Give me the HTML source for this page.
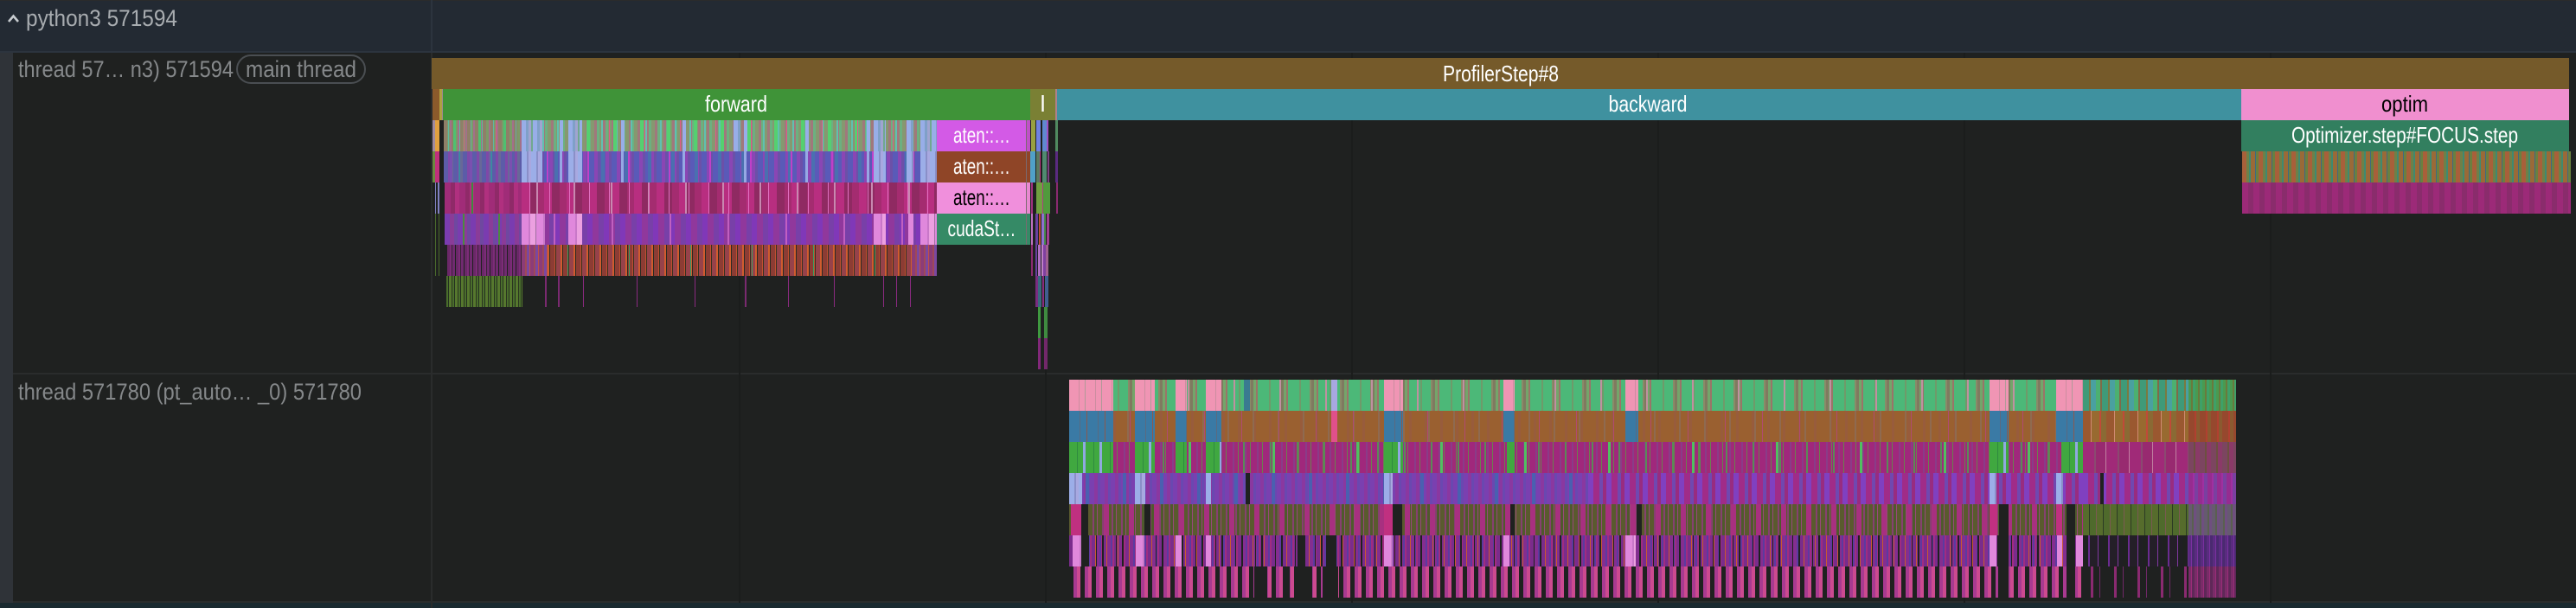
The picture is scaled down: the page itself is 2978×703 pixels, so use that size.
<!DOCTYPE html>
<html><head><meta charset="utf-8"><style>
html,body{margin:0;padding:0;background:#1f2120;width:2978px;height:703px;overflow:hidden}
#r{position:relative;width:2978px;height:703px;overflow:hidden;background:#1f2120}
#r div{position:absolute}
svg{position:absolute;left:0;top:0}
text{font-family:"Liberation Sans",sans-serif}
.a{background:
repeating-linear-gradient(90deg,transparent 0 23px,#e0558a 23px 24px,transparent 24px 37px),
repeating-linear-gradient(90deg,transparent 0 11px,#4fc070 11px 14px,transparent 14px 29px),
repeating-linear-gradient(90deg,transparent 0 5px,#5fb8a0 5px 6px,transparent 6px 13px),
repeating-linear-gradient(90deg,#8f7f68 0 4px,#7c9a68 4px 7px,#a3708a 7px 9px)}
.a2{background:
repeating-linear-gradient(90deg,transparent 0 44px,#98aee8 44px 48px,transparent 48px 71px),
repeating-linear-gradient(90deg,transparent 0 19px,#e05a88 19px 20px,transparent 20px 41px),
repeating-linear-gradient(90deg,transparent 0 13px,#55d070 13px 17px,transparent 17px 31px),
repeating-linear-gradient(90deg,transparent 0 7px,#60c0b0 7px 9px,transparent 9px 17px),
repeating-linear-gradient(90deg,#869870 0 4px,#a0787c 4px 7px,#6cb080 7px 10px)}
.ab{background:
repeating-linear-gradient(90deg,#98aee8 0 5px,#7fa0c8 5px 8px,#a0a4d0 8px 11px,#70a890 11px 13px)}
.b{background:
repeating-linear-gradient(90deg,transparent 0 17px,#3c8aa0 17px 19px,transparent 19px 37px),
repeating-linear-gradient(90deg,transparent 0 7px,#7a50b0 7px 10px,transparent 10px 23px),
repeating-linear-gradient(90deg,#5c5ca8 0 5px,#8048a8 5px 8px,#686898 8px 11px)}
.b2{background:
repeating-linear-gradient(90deg,transparent 0 44px,#96a8e4 44px 47px,transparent 47px 71px),
repeating-linear-gradient(90deg,transparent 0 29px,#c040c8 29px 31px,transparent 31px 47px),
repeating-linear-gradient(90deg,transparent 0 11px,#4a70b0 11px 15px,transparent 15px 27px),
repeating-linear-gradient(90deg,#5a5ab8 0 6px,#8a46b4 6px 10px,#6c50a8 10px 13px)}
.bb{background:repeating-linear-gradient(90deg,#9caee8 0 6px,#8a8fc8 6px 8px,#a8a8e0 8px 11px)}
.c{background:
repeating-linear-gradient(90deg,transparent 0 31px,#3f8a40 31px 33px,transparent 33px 61px),
repeating-linear-gradient(90deg,#a02c78 0 7px,#8f2a68 7px 12px,#b0307f 12px 17px)}
.c2{background:
repeating-linear-gradient(90deg,transparent 0 9px,#e070c0 9px 10px,transparent 10px 23px),
repeating-linear-gradient(90deg,transparent 0 17px,#c888b0 17px 19px,transparent 19px 43px),
repeating-linear-gradient(90deg,#b82e80 0 9px,#8f2a62 9px 18px,#a42c70 18px 26px)}
.d{background:
repeating-linear-gradient(90deg,transparent 0 21px,#4c8a40 21px 23px,transparent 23px 41px),
repeating-linear-gradient(90deg,#7a3cb0 0 6px,#8a3c98 6px 11px,#6f48a0 11px 15px)}
.d2{background:
repeating-linear-gradient(90deg,transparent 0 37px,#c060c0 37px 39px,transparent 39px 67px),
repeating-linear-gradient(90deg,#8038b8 0 6px,#90389c 6px 13px,#7840a8 13px 19px)}
.dp{background:repeating-linear-gradient(90deg,#e088dc 0 8px,#c878c8 8px 10px,#eca0e0 10px 16px,#a070a0 16px 17px)}
.e{background:
repeating-linear-gradient(90deg,#1f2120 0 1px,#6a2868 1px 4px,#7c2c78 4px 6px,#3a2438 6px 7px,#702a70 7px 10px)}
.e2{background:
repeating-linear-gradient(90deg,transparent 0 23px,#3aa060 23px 24px,transparent 24px 71px),
repeating-linear-gradient(90deg,#d05c2e 0 2px,#2b2a22 2px 3px,#8c3c34 3px 8px,#c05030 8px 9px,#38301f 9px 10px,#96424a 10px 15px)}
.e0{background:repeating-linear-gradient(90deg,#8c3c78 0 4px,#a04858 4px 6px,#7a48a0 6px 9px,#c05048 9px 10px)}
.f{background:repeating-linear-gradient(90deg,#4a6e2c 0 2px,#243020 2px 3px,#56782e 3px 6px,#2a3420 6px 7px)}
.g{background:
repeating-linear-gradient(90deg,transparent 0 31px,#c090a0 31px 33px,transparent 33px 53px),
repeating-linear-gradient(90deg,#7f7a60 0 3px,#74a56a 3px 6px,#9a7468 6px 8px,#4cb878 8px 21px,#6f9a6a 21px 23px,#4cb878 23px 33px,#8a8a68 33px 35px)}
.gp{background:repeating-linear-gradient(90deg,#f095b4 0 11px,#cc8ea0 11px 12px,#f095b4 12px 18px,#b09a98 18px 19px)}
.h{background:
repeating-linear-gradient(90deg,transparent 0 27px,#b04a70 27px 28px,transparent 28px 43px),
repeating-linear-gradient(90deg,transparent 0 9px,#8f6a50 9px 11px,transparent 11px 29px),
repeating-linear-gradient(90deg,#9a6030 0 15px,#985c3c 15px 18px)}
.hb{background:repeating-linear-gradient(90deg,#3a7aa5 0 12px,#5a6a80 12px 13px,#3a7aa5 13px 20px,#8a5a50 20px 21px)}
.i{background:
repeating-linear-gradient(90deg,transparent 0 41px,#50c060 41px 44px,transparent 44px 97px),
repeating-linear-gradient(90deg,transparent 0 15px,#5a8a58 15px 17px,transparent 17px 31px),
repeating-linear-gradient(90deg,#a0287c 0 7px,#8a3c88 7px 9px,#a02a78 9px 13px,#6a8050 13px 14px)}
.ig{background:repeating-linear-gradient(90deg,#40a840 0 9px,#2f8a40 9px 10px,#40a840 10px 16px,#90a8e0 16px 19px)}
.j{background:
repeating-linear-gradient(90deg,transparent 0 19px,#4a60b0 19px 23px,transparent 23px 43px),
repeating-linear-gradient(90deg,#7a40b0 0 5px,#8a38a0 5px 9px,#6a48b0 9px 12px)}
.j2{background:repeating-linear-gradient(90deg,#8040c0 0 6px,#a02c88 6px 13px,#7048b0 13px 17px,#982c80 17px 21px)}
.k{background:
repeating-linear-gradient(90deg,transparent 0 11px,#a83080 11px 17px,transparent 17px 29px),
repeating-linear-gradient(90deg,#5a5a2e 0 5px,#864070 5px 7px,#4f5a2c 7px 10px,#98487a 10px 11px)}
.l{background:
repeating-linear-gradient(90deg,transparent 0 8px,#1f2120 8px 9px,transparent 9px 15px,#1f2120 15px 17px,transparent 17px 23px),
repeating-linear-gradient(90deg,#7a2c8c 0 4px,#c85a30 4px 5px,#842e90 5px 9px,#5c3aa0 9px 11px,#a02c80 11px 13px)}
.m{background:repeating-linear-gradient(90deg,#1f2120 0 5px,#a83a90 5px 9px,#cc4a90 9px 13px)}
.k3{background:repeating-linear-gradient(90deg,#566c2c 0 7px,#2c3a24 7px 8px,#4f6a2c 8px 15px,#7a5a50 15px 16px)}
.l3{background:repeating-linear-gradient(90deg,#1f2120 0 6px,#6a2c90 6px 8px,#241f28 8px 17px,#8038a0 17px 18px,#201f24 18px 23px)}
.m3{background:repeating-linear-gradient(90deg,#1f2120 0 9px,#8a2a70 9px 12px,#1f2120 12px 19px,#702868 19px 20px,#1f2120 20px 27px)}
.g3{background:repeating-linear-gradient(90deg,#3f9a78 0 7px,#7a7a40 7px 9px,#4aa0a0 9px 15px,#4cb070 15px 20px,#806a48 20px 22px)}
.h3{background:repeating-linear-gradient(90deg,#9a5830 0 9px,#d08a70 9px 10px,#986a30 10px 19px,#c04a38 19px 21px,#8a6a34 21px 27px)}
.i3{background:repeating-linear-gradient(90deg,#a02a78 0 13px,#8a4a70 13px 15px,#982a70 15px 26px,#c080a0 26px 27px)}
.g4{background:repeating-linear-gradient(90deg,#4a9a50 0 3px,#6a7a3c 3px 5px,#3fa068 5px 8px)}
.h4{background:repeating-linear-gradient(90deg,#96482e 0 7px,#b04030 7px 9px,#8a5a30 9px 13px)}
.i4{background:repeating-linear-gradient(90deg,#7c4560 0 6px,#6c5040 6px 8px,#8a3a68 8px 13px)}
.j4{background:repeating-linear-gradient(90deg,#962c90 0 5px,#a030a0 5px 7px,#7a40a0 7px 11px)}
.k4{background:repeating-linear-gradient(90deg,#665a70 0 4px,#5a6050 4px 6px,#6f4f80 6px 9px)}
.l4{background:repeating-linear-gradient(90deg,#5a2c80 0 3px,#7a30a0 3px 4px,#4a2a70 4px 7px)}
.m4{background:repeating-linear-gradient(90deg,#7a2c68 0 3px,#9a2c78 3px 4px,#5f2858 4px 7px)}
.s1{background:repeating-linear-gradient(90deg,#a8603a 0 5px,#6f8048 5px 8px,#3f8a70 8px 10px,#9a6a38 10px 15px,#3f6a80 15px 16px,#6a8040 16px 19px)}
.s2{background:repeating-linear-gradient(90deg,#9c2a78 0 7px,#8a2c6c 7px 13px)}
</style></head><body><div id="r">
<!-- header -->
<div style="left:0;top:0;width:2978px;height:60px;background:#232a33"></div>
<div style="left:0;top:0;width:2978px;height:1px;background:#2b2b2b"></div>
<div style="left:0;top:59px;width:2978px;height:2px;background:#2c343e"></div>
<div style="left:498px;top:0;width:2px;height:60px;background:#2c343e"></div>
<!-- side strip + lines -->
<div style="left:0;top:61px;width:15px;height:636px;background:#2f3338"></div>
<div style="left:15px;top:431px;width:2963px;height:2px;background:#2a2c2c"></div>
<div style="left:15px;top:695px;width:2963px;height:2px;background:#2a2c2c"></div>
<div style="left:0;top:697px;width:2978px;height:6px;background:#1a2a30"></div>
<div style="left:498px;top:61px;width:2px;height:642px;background:#2a2c2c"></div>
<div style="left:854px;top:61px;width:2px;height:636px;background:#1b1d1c"></div>
<div style="left:1208px;top:61px;width:2px;height:636px;background:#1b1d1c"></div>
<div style="left:1562px;top:61px;width:2px;height:636px;background:#1b1d1c"></div>
<div style="left:1916px;top:61px;width:2px;height:636px;background:#1b1d1c"></div>
<div style="left:2270px;top:61px;width:2px;height:636px;background:#1b1d1c"></div>
<div style="left:2624px;top:61px;width:2px;height:636px;background:#1b1d1c"></div>

<!-- main thread blocks -->
<div style="left:499px;top:67px;width:2471px;height:36px;background:#755a2a"></div>
<div style="left:500px;top:103px;width:8px;height:36px;background:#8b5a2b"></div>
<div style="left:508px;top:103px;width:3px;height:36px;background:#b0a040"></div>
<div style="left:511px;top:103px;width:1px;height:36px;background:#a08a90"></div>
<div style="left:512px;top:103px;width:679px;height:36px;background:#3f9338"></div>
<div style="left:1191px;top:103px;width:29px;height:36px;background:#7a8034"></div>
<div style="left:1220px;top:103px;width:2px;height:36px;background:#b08088"></div>
<div style="left:1222px;top:103px;width:1369px;height:36px;background:#3f919f"></div>
<div style="left:2591px;top:103px;width:379px;height:36px;background:#f08fcf"></div>
<div style="left:2591px;top:139px;width:379px;height:36px;background:#327f5f"></div>
<div class="s1" style="left:2592px;top:175px;width:380px;height:36px"></div>
<div class="s2" style="left:2592px;top:211px;width:380px;height:36px"></div>

<!-- left fragments -->
<div style="left:500px;top:139px;width:3px;height:36px;background:#a08aa0"></div>
<div style="left:503px;top:139px;width:5px;height:36px;background:#e0a040"></div>
<div style="left:500px;top:175px;width:3px;height:36px;background:#6a8a40"></div>
<div style="left:503px;top:175px;width:5px;height:36px;background:#c0307c"></div>
<div style="left:503px;top:211px;width:1px;height:36px;background:#8080c0"></div>
<div style="left:506px;top:211px;width:2px;height:36px;background:#8080c0"></div>
<div style="left:503px;top:247px;width:1px;height:72px;background:#4a6a2c"></div>
<div style="left:507px;top:247px;width:1px;height:72px;background:#4a6a2c"></div>

<!-- row 3-8 forward -->
<div class="a" style="left:513px;top:139px;width:90px;height:36px"></div>
<div class="a2" style="left:603px;top:139px;width:480px;height:36px"></div>
<div class="ab" style="left:603px;top:139px;width:24px;height:36px"></div>
<div class="ab" style="left:657px;top:139px;width:16px;height:36px"></div>
<div class="ab" style="left:848px;top:139px;width:8px;height:36px"></div>
<div class="ab" style="left:1010px;top:139px;width:14px;height:36px"></div>
<div class="ab" style="left:1048px;top:139px;width:8px;height:36px"></div>
<div class="ab" style="left:1064px;top:139px;width:19px;height:36px"></div>
<div class="b" style="left:513px;top:175px;width:90px;height:36px"></div>
<div class="b2" style="left:603px;top:175px;width:480px;height:36px"></div>
<div class="bb" style="left:603px;top:175px;width:24px;height:36px"></div>
<div class="bb" style="left:657px;top:175px;width:16px;height:36px"></div>
<div class="bb" style="left:1010px;top:175px;width:14px;height:36px"></div>
<div class="bb" style="left:1048px;top:175px;width:8px;height:36px"></div>
<div class="bb" style="left:1064px;top:175px;width:19px;height:36px"></div>
<div class="c" style="left:514px;top:211px;width:89px;height:36px"></div>
<div class="c2" style="left:603px;top:211px;width:480px;height:36px"></div>
<div class="d" style="left:514px;top:247px;width:89px;height:36px"></div>
<div class="d2" style="left:603px;top:247px;width:480px;height:36px"></div>
<div class="dp" style="left:603px;top:247px;width:27px;height:36px"></div>
<div class="dp" style="left:657px;top:247px;width:16px;height:36px"></div>
<div class="dp" style="left:1010px;top:247px;width:14px;height:36px"></div>
<div class="dp" style="left:1050px;top:247px;width:6px;height:36px"></div>
<div class="dp" style="left:1064px;top:247px;width:19px;height:36px"></div>
<div class="e" style="left:516px;top:283px;width:87px;height:36px"></div>
<div class="e0" style="left:603px;top:283px;width:30px;height:36px"></div>
<div class="e2" style="left:633px;top:283px;width:421px;height:36px"></div>
<div class="e0" style="left:1054px;top:283px;width:29px;height:36px"></div>
<div class="f" style="left:516px;top:319px;width:88px;height:36px"></div>
<div style="left:630px;top:319px;width:2px;height:36px;background:#7a2a70"></div>
<div style="left:645px;top:319px;width:2px;height:36px;background:#7a2a70"></div>
<div style="left:674px;top:319px;width:1px;height:36px;background:#8a2a80"></div>
<div style="left:736px;top:319px;width:1px;height:36px;background:#8a2a80"></div>
<div style="left:803px;top:319px;width:1px;height:36px;background:#8a2a80"></div>
<div style="left:861px;top:319px;width:2px;height:36px;background:#7a2a70"></div>
<div style="left:911px;top:319px;width:1px;height:36px;background:#8a2a80"></div>
<div style="left:964px;top:319px;width:1px;height:36px;background:#8a2a80"></div>
<div style="left:1021px;top:319px;width:1px;height:36px;background:#8a2a80"></div>
<div style="left:1036px;top:319px;width:1px;height:36px;background:#8a2a80"></div>
<div style="left:1052px;top:319px;width:1px;height:36px;background:#8a2a80"></div>

<!-- aten column -->
<div style="left:1083px;top:139px;width:103px;height:36px;background:#d35ae6"></div>
<div style="left:1083px;top:175px;width:103px;height:36px;background:#8f4527"></div>
<div style="left:1083px;top:211px;width:103px;height:36px;background:#f08fdc"></div>
<div style="left:1083px;top:247px;width:103px;height:36px;background:#358a66"></div>
<div style="left:1186px;top:139px;width:1px;height:144px;background:#7a6a70"></div>
<div style="left:1187px;top:139px;width:4px;height:36px;background:#c050c8"></div>
<div style="left:1187px;top:175px;width:4px;height:36px;background:#8f4527"></div>
<div style="left:1187px;top:211px;width:4px;height:36px;background:#e888d0"></div>
<div style="left:1187px;top:247px;width:4px;height:36px;background:#358a66"></div>
<div style="left:1192px;top:247px;width:2px;height:36px;background:#c070c0"></div>
<div style="left:1192px;top:283px;width:2px;height:36px;background:#8a2a70"></div>

<!-- narrow column -->
<div style="left:1192px;top:139px;width:5px;height:36px;background:#98a040"></div>
<div style="left:1198px;top:139px;width:5px;height:36px;background:#7080e0"></div>
<div style="left:1205px;top:139px;width:5px;height:36px;background:#6088d0"></div>
<div style="left:1210px;top:139px;width:2px;height:36px;background:#a050c0"></div>
<div style="left:1220px;top:139px;width:3px;height:36px;background:#508a60"></div>
<div style="left:1191px;top:175px;width:6px;height:36px;background:#50a0c8"></div>
<div style="left:1198px;top:175px;width:4px;height:36px;background:#5a7a60"></div>
<div style="left:1202px;top:175px;width:1px;height:36px;background:#c03080"></div>
<div style="left:1205px;top:175px;width:5px;height:36px;background:#508a70"></div>
<div style="left:1211px;top:175px;width:2px;height:36px;background:#7a4080"></div>
<div style="left:1220px;top:175px;width:3px;height:36px;background:#5a2a80"></div>
<div style="left:1192px;top:211px;width:2px;height:36px;background:#a03080"></div>
<div style="left:1198px;top:211px;width:7px;height:36px;background:#70a040"></div>
<div style="left:1205px;top:211px;width:1px;height:36px;background:#a84080"></div>
<div style="left:1206px;top:211px;width:8px;height:36px;background:#509a3c"></div>
<div style="left:1221px;top:211px;width:2px;height:36px;background:#8a2a70"></div>
<div style="left:1197px;top:247px;width:3px;height:36px;background:#6a40a0"></div>
<div style="left:1201px;top:247px;width:2px;height:36px;background:#c05030"></div>
<div style="left:1204px;top:247px;width:3px;height:36px;background:#9070d0"></div>
<div style="left:1207px;top:247px;width:2px;height:36px;background:#4a8a50"></div>
<div style="left:1210px;top:247px;width:3px;height:36px;background:#a04090"></div>
<div style="left:1197px;top:283px;width:2px;height:36px;background:#6a40a0"></div>
<div style="left:1200px;top:283px;width:3px;height:36px;background:#b070c0"></div>
<div style="left:1204px;top:283px;width:2px;height:36px;background:#c080c8"></div>
<div style="left:1206px;top:283px;width:3px;height:36px;background:#8040a0"></div>
<div style="left:1209px;top:283px;width:3px;height:36px;background:#a06090"></div>
<div style="left:1197px;top:319px;width:3px;height:36px;background:#7a2c80"></div>
<div style="left:1200px;top:319px;width:4px;height:36px;background:#3a6a80"></div>
<div style="left:1205px;top:319px;width:2px;height:36px;background:#8a2c80"></div>
<div style="left:1208px;top:319px;width:4px;height:36px;background:#3f5f90"></div>
<div style="left:1200px;top:355px;width:3px;height:36px;background:#3f9a40"></div>
<div style="left:1207px;top:355px;width:4px;height:36px;background:#3f8a40"></div>
<div style="left:1200px;top:391px;width:3px;height:36px;background:#82287a"></div>
<div style="left:1207px;top:391px;width:4px;height:36px;background:#72286a"></div>

<!-- thread 2: rows -->
<div class="g" style="left:1236px;top:439px;width:1172px;height:36px"></div>
<div class="h" style="left:1236px;top:475px;width:1172px;height:36px"></div>
<div class="i" style="left:1236px;top:511px;width:1172px;height:36px"></div>
<div class="j" style="left:1236px;top:547px;width:600px;height:36px"></div>
<div class="j2" style="left:1836px;top:547px;width:572px;height:36px"></div>
<div class="k" style="left:1236px;top:583px;width:1172px;height:36px"></div>
<div class="l" style="left:1236px;top:619px;width:1172px;height:36px"></div>
<div class="m" style="left:1236px;top:655px;width:1172px;height:36px"></div>
<!-- tail -->
<div class="g3" style="left:2408px;top:439px;width:122px;height:36px"></div>
<div class="h3" style="left:2408px;top:475px;width:122px;height:36px"></div>
<div class="i3" style="left:2408px;top:511px;width:122px;height:36px"></div>
<div class="j2" style="left:2408px;top:547px;width:122px;height:36px"></div>
<div class="k3" style="left:2408px;top:583px;width:122px;height:36px"></div>
<div class="l3" style="left:2408px;top:619px;width:122px;height:36px"></div>
<div class="m3" style="left:2408px;top:655px;width:122px;height:36px"></div>
<div class="g4" style="left:2530px;top:439px;width:55px;height:36px"></div>
<div class="h4" style="left:2530px;top:475px;width:55px;height:36px"></div>
<div class="i4" style="left:2530px;top:511px;width:55px;height:36px"></div>
<div class="j4" style="left:2530px;top:547px;width:55px;height:36px"></div>
<div class="k4" style="left:2530px;top:583px;width:55px;height:36px"></div>
<div class="l4" style="left:2530px;top:619px;width:55px;height:36px"></div>
<div class="m4" style="left:2530px;top:655px;width:55px;height:36px"></div>
<!-- pink blocks -->
<div class="gp" style="left:1236px;top:439px;width:51px;height:36px"></div><div class="hb" style="left:1236px;top:475px;width:51px;height:36px"></div><div class="ig" style="left:1236px;top:511px;width:51px;height:36px"></div><div class="bb" style="left:1236px;top:547px;width:15px;height:36px"></div><div class="dp" style="left:1240px;top:619px;width:10px;height:36px"></div><div style="left:1238px;top:583px;width:12px;height:36px;background:#c03080"></div>
<div class="gp" style="left:1312px;top:439px;width:23px;height:36px"></div><div class="hb" style="left:1312px;top:475px;width:23px;height:36px"></div><div class="ig" style="left:1312px;top:511px;width:23px;height:36px"></div><div class="bb" style="left:1312px;top:547px;width:12px;height:36px"></div><div class="dp" style="left:1313px;top:619px;width:10px;height:36px"></div>
<div class="gp" style="left:1359px;top:439px;width:13px;height:36px"></div><div class="hb" style="left:1359px;top:475px;width:13px;height:36px"></div><div class="ig" style="left:1359px;top:511px;width:13px;height:36px"></div><div class="dp" style="left:1359px;top:619px;width:7px;height:36px"></div>
<div class="gp" style="left:1394px;top:439px;width:18px;height:36px"></div><div class="hb" style="left:1394px;top:475px;width:18px;height:36px"></div><div class="ig" style="left:1394px;top:511px;width:18px;height:36px"></div><div class="bb" style="left:1394px;top:547px;width:6px;height:36px"></div><div class="dp" style="left:1394px;top:619px;width:6px;height:36px"></div>
<div style="left:1438px;top:439px;width:7px;height:36px;background:#3a7a90"></div>
<div style="left:1539px;top:439px;width:7px;height:36px;background:#a8a8e0"></div><div style="left:1539px;top:475px;width:7px;height:36px;background:#e0508a"></div>
<div class="gp" style="left:1600px;top:439px;width:22px;height:36px"></div><div class="hb" style="left:1600px;top:475px;width:22px;height:36px"></div><div class="ig" style="left:1600px;top:511px;width:22px;height:36px"></div><div class="bb" style="left:1600px;top:547px;width:10px;height:36px"></div><div style="left:1600px;top:583px;width:10px;height:36px;background:#c03080"></div><div class="dp" style="left:1600px;top:619px;width:10px;height:36px"></div>
<div class="gp" style="left:1738px;top:439px;width:13px;height:36px"></div><div class="hb" style="left:1738px;top:475px;width:13px;height:36px"></div><div class="ig" style="left:1742px;top:511px;width:9px;height:36px"></div><div class="dp" style="left:1738px;top:619px;width:7px;height:36px"></div>
<div class="gp" style="left:1879px;top:439px;width:15px;height:36px"></div><div class="hb" style="left:1879px;top:475px;width:15px;height:36px"></div><div class="dp" style="left:1879px;top:619px;width:12px;height:36px"></div>
<div class="gp" style="left:2300px;top:439px;width:22px;height:36px"></div><div class="hb" style="left:2300px;top:475px;width:22px;height:36px"></div><div class="ig" style="left:2300px;top:511px;width:22px;height:36px"></div><div class="bb" style="left:2300px;top:547px;width:8px;height:36px"></div><div style="left:2300px;top:583px;width:9px;height:36px;background:#c03080"></div><div class="dp" style="left:2300px;top:619px;width:8px;height:36px"></div>
<div class="gp" style="left:2377px;top:439px;width:31px;height:36px"></div><div class="hb" style="left:2377px;top:475px;width:31px;height:36px"></div><div class="ig" style="left:2383px;top:511px;width:25px;height:36px"></div><div class="bb" style="left:2377px;top:547px;width:8px;height:36px"></div><div style="left:2377px;top:583px;width:7px;height:36px;background:#c03080"></div><div class="dp" style="left:2378px;top:619px;width:6px;height:36px"></div><div class="dp" style="left:2400px;top:619px;width:8px;height:36px"></div>
<!-- dark gaps -->
<div style="left:1440px;top:547px;width:5px;height:36px;background:#1f2120"></div>
<div style="left:2428px;top:547px;width:4px;height:36px;background:#1f2120"></div>
<div style="left:1250px;top:583px;width:8px;height:36px;background:#1f2120"></div>
<div style="left:1323px;top:583px;width:7px;height:36px;background:#1f2120"></div>
<div style="left:1610px;top:583px;width:11px;height:36px;background:#1f2120"></div>
<div style="left:1746px;top:583px;width:5px;height:36px;background:#1f2120"></div>
<div style="left:1892px;top:583px;width:6px;height:36px;background:#1f2120"></div>
<div style="left:2311px;top:583px;width:11px;height:36px;background:#1f2120"></div>
<div style="left:2389px;top:583px;width:10px;height:36px;background:#1f2120"></div>
<div style="left:1250px;top:619px;width:9px;height:36px;background:#1f2120"></div>
<div style="left:1500px;top:619px;width:9px;height:36px;background:#1f2120"></div>
<div style="left:1533px;top:619px;width:12px;height:36px;background:#1f2120"></div>
<div style="left:2311px;top:619px;width:11px;height:36px;background:#1f2120"></div>
<div style="left:2389px;top:619px;width:10px;height:36px;background:#1f2120"></div>
<div style="left:1450px;top:655px;width:15px;height:36px;background:#1f2120"></div>
<div style="left:1483px;top:655px;width:8px;height:36px;background:#1f2120"></div>
<div style="left:1501px;top:655px;width:16px;height:36px;background:#1f2120"></div>
<div style="left:1529px;top:655px;width:18px;height:36px;background:#1f2120"></div>
<div style="left:2310px;top:655px;width:12px;height:36px;background:#1f2120"></div>
<div style="left:2389px;top:655px;width:10px;height:36px;background:#1f2120"></div>

<svg width="2978" height="703" viewBox="0 0 2978 703">
<polyline points="10,25 15.5,18.5 21,25" fill="none" stroke="#c8ccd0" stroke-width="2.6"/>
<text x="30" y="30" font-size="27" fill="#a8acb0" textLength="175" lengthAdjust="spacingAndGlyphs">python3 571594</text>
<text x="21" y="89" font-size="27" fill="#85888a" textLength="249" lengthAdjust="spacingAndGlyphs">thread 57… n3) 571594</text>
<rect x="274" y="64" width="148" height="32" rx="16" fill="none" stroke="#4a4e52" stroke-width="2"/>
<text x="284" y="89" font-size="27" fill="#85888a" textLength="128" lengthAdjust="spacingAndGlyphs">main thread</text>
<text x="21" y="462" font-size="27" fill="#85888a" textLength="397" lengthAdjust="spacingAndGlyphs">thread 571780 (pt_auto… _0) 571780</text>
<g font-size="26" text-anchor="middle" fill="#fff">
<text x="1735" y="94" textLength="134" lengthAdjust="spacingAndGlyphs">ProfilerStep#8</text>
<text x="851" y="129" textLength="72" lengthAdjust="spacingAndGlyphs">forward</text>
<text x="1205.5" y="129">l</text>
<text x="1905" y="129" textLength="91" lengthAdjust="spacingAndGlyphs">backward</text>
<text x="2780" y="129" fill="#000" textLength="54" lengthAdjust="spacingAndGlyphs">optim</text>
<text x="2780" y="165" textLength="262" lengthAdjust="spacingAndGlyphs">Optimizer.step#FOCUS.step</text>
<text x="1135" y="165" textLength="66" lengthAdjust="spacingAndGlyphs">aten::…</text>
<text x="1135" y="201" textLength="66" lengthAdjust="spacingAndGlyphs">aten::…</text>
<text x="1135" y="237" fill="#000" textLength="66" lengthAdjust="spacingAndGlyphs">aten::…</text>
<text x="1135" y="273" textLength="79" lengthAdjust="spacingAndGlyphs">cudaSt…</text>
</g>
</svg>
</div></body></html>
